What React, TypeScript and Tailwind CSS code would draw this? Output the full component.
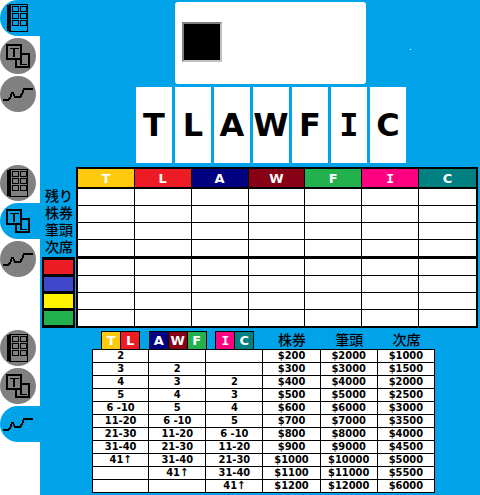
import React from "react";

type Letter = "T" | "L" | "A" | "W" | "F" | "I" | "C";
type IconName = "building" | "cards" | "chart";

const letters: Letter[] = ["T", "L", "A", "W", "F", "I", "C"];

const letterColor: Record<Letter, string> = {
  T: "bg-[#ffc90e]",
  L: "bg-[#ed1c24]",
  A: "bg-[#000080]",
  W: "bg-[#880015]",
  F: "bg-[#22b14c]",
  I: "bg-[#ff0080]",
  C: "bg-[#008080]",
};

const playerColors = ["bg-[#ed1c24]", "bg-[#3f48cc]", "bg-[#fff200]", "bg-[#22b14c]"];
const rowLabels = ["残り", "株券", "筆頭", "次席"];
const navItems: { name: IconName; label: string }[] = [
  { name: "building", label: "会社" },
  { name: "cards", label: "株券" },
  { name: "chart", label: "株価" },
];

const steps = ["2", "3", "4", "5", "6 -10", "11-20", "21-30", "31-40", "41↑"];
const priceRows = Array.from({ length: 11 }, (_, i) => [
  steps[i] ?? "",
  steps[i - 1] ?? "",
  steps[i - 2] ?? "",
  `$${200 + i * 100}`,
  `$${2000 + i * 1000}`,
  `$${1000 + i * 500}`,
]);
const grades: Letter[][] = [["T", "L"], ["A", "W", "F"], ["I", "C"]];

const latin = "font-['DejaVu_Sans',sans-serif]";
const latinMono = "font-['DejaVu_Sans_Mono',monospace]";
const japanese = "font-['Liberation_Sans','Noto_Sans_CJK_JP',sans-serif]";

// The capital I needs serifs, which only the monospaced cut has.
function Glyph({ letter }: { letter: Letter }) {
  return <span className={letter === "I" ? latinMono : latin}>{letter}</span>;
}

function Icon({ name }: { name: IconName }) {
  return (
    <svg viewBox="0 0 36 36" className="size-9" shapeRendering="crispEdges" fill="none" stroke="#000" aria-hidden="true">
      {name === "building" && (
        <>
          <path d="M7 5h2V4h19v28H9v-1H7z" fill="#000" stroke="none" />
          <path d="M11 5h16v26H11z" className="fill-current" stroke="none" />
          {[6, 13, 20].map((y) =>
            [12, 20].map((x) => <rect key={`${x}-${y}`} x={x + 0.5} y={y + 0.5} width="6" height="5" />),
          )}
        </>
      )}
      {name === "cards" && (
        <>
          <rect x="16" y="16" width="13" height="13" strokeWidth="2" />
          <path d="M20 26.5h7" />
          <path d="M21 21v6" strokeWidth="2" />
          <rect x="7" y="7" width="14" height="14" strokeWidth="2" className="fill-current" />
          <path d="M10 10.5h9" />
          <path d="M14 10v9" strokeWidth="2" />
        </>
      )}
      {name === "chart" && <path d="M3 24h5l2-2 2-5h1l2 4h5l2-3 2-5h9" strokeWidth="2" />}
    </svg>
  );
}

function NavGroup({ active }: { active: IconName }) {
  return (
    <nav className="flex flex-col gap-[2px]">
      {navItems.map(({ name, label }) =>
        name === active ? (
          <button key={name} aria-label={label} aria-current="page" className="block h-9 w-full rounded-l-full bg-[#00a2e8] text-[#00a2e8]">
            <Icon name={name} />
          </button>
        ) : (
          <button key={name} aria-label={label} className="block size-9 rounded-full bg-[#808080] text-[#808080]">
            <Icon name={name} />
          </button>
        ),
      )}
    </nav>
  );
}

function StockTable() {
  return (
    <table className="w-full table-fixed border-separate border-spacing-0 self-start border-2 border-black bg-white">
      <thead>
        <tr>
          {letters.map((l) => (
            <th key={l} scope="col" className={`h-5 border-r border-b-2 border-black p-0 text-[13px] leading-4 font-bold text-white last:border-r-0 ${letterColor[l]}`}>
              <Glyph letter={l} />
            </th>
          ))}
        </tr>
      </thead>
      <tbody>
        {Array.from({ length: 8 }, (_, row) => (
          <tr key={row}>
            {letters.map((l) => (
              <td
                key={l}
                className={`border-r border-black p-0 last:border-r-0 ${
                  row === 3 ? "h-[19px] border-b-3" : row === 7 ? "h-4" : "h-[17px] border-b"
                }`}
              />
            ))}
          </tr>
        ))}
      </tbody>
    </table>
  );
}

function PriceTable() {
  return (
    <table className="w-[343px] table-fixed border-separate border-spacing-0">
      <thead>
        <tr>
          {grades.map((group) => (
            <th key={group.join("")} scope="col" className="h-[18px] p-0">
              <div className="-mx-px flex justify-center">
                <div className="flex gap-px bg-black px-px pt-px">
                  {group.map((l) => (
                    <span key={l} className={`h-[17px] w-[18px] text-center text-[13px] leading-[17px] font-bold text-white ${letterColor[l]}`}>
                      <Glyph letter={l} />
                    </span>
                  ))}
                </div>
              </div>
            </th>
          ))}
          {rowLabels.slice(1).map((label) => (
            <th key={label} scope="col" className={`h-[18px] p-0 text-sm leading-4 font-medium ${japanese}`}>
              {label}
            </th>
          ))}
        </tr>
      </thead>
      <tbody className="font-['DejaVu_Sans_Condensed','DejaVu_Sans',sans-serif] text-[11px] leading-3 font-bold">
        {priceRows.map((row, i) => (
          <tr key={i} className="group bg-white">
            {row.map((value, j) => (
              <td key={j} className="h-[13px] border-r border-b border-black p-0 text-center whitespace-nowrap group-first:h-[14px] group-first:border-t first:border-l">
                {value}
              </td>
            ))}
          </tr>
        ))}
      </tbody>
    </table>
  );
}

export default function App() {
  return (
    <div className="flex min-h-screen bg-white text-black">
      <aside className="flex w-10 shrink-0 flex-col gap-[53px]">
        <NavGroup active="building" />
        <NavGroup active="cards" />
        <NavGroup active="chart" />
      </aside>
      <main className="flex grow flex-col bg-[#00a2e8] py-[2px]">
        <div className="flex justify-center pl-[22px]">
          <div className="relative flex flex-col gap-[3px]">
            <section className="ml-[39px] flex h-[82px] w-[191px] items-start rounded-[3px] bg-white px-[7px] py-5">
              <div className="size-10 border-2 border-t-[#808080] border-r-[#c0c0c0] border-b-[#c0c0c0] border-l-[#808080] bg-black" />
            </section>
            <section className="flex gap-[3px]">
              {letters.map((l) => (
                <div key={l} className="flex h-[76px] w-9 items-center justify-center bg-white text-[32px] leading-none font-bold">
                  <Glyph letter={l} />
                </div>
              ))}
            </section>
            <i className="absolute top-[47px] -right-[5px] size-px bg-white" />
          </div>
        </div>
        <section className="mt-1 flex px-[2px]">
          <div className="w-[34px] shrink-0 pt-[21px]">
            <div className="pb-px">
              {rowLabels.map((label) => (
                <div key={label} className={`h-[17px] text-center text-sm leading-[17px] font-medium whitespace-nowrap ${japanese}`}>
                  {label}
                </div>
              ))}
            </div>
            <div className="flex w-[33px] flex-col gap-[3px] bg-black px-[2px] py-[3px]">
              {playerColors.map((color) => (
                <div key={color} className={`h-[14px] ${color}`} />
              ))}
            </div>
          </div>
          <StockTable />
        </section>
        <section className="mt-[3px] pl-[52px]">
          <PriceTable />
        </section>
      </main>
    </div>
  );
}
